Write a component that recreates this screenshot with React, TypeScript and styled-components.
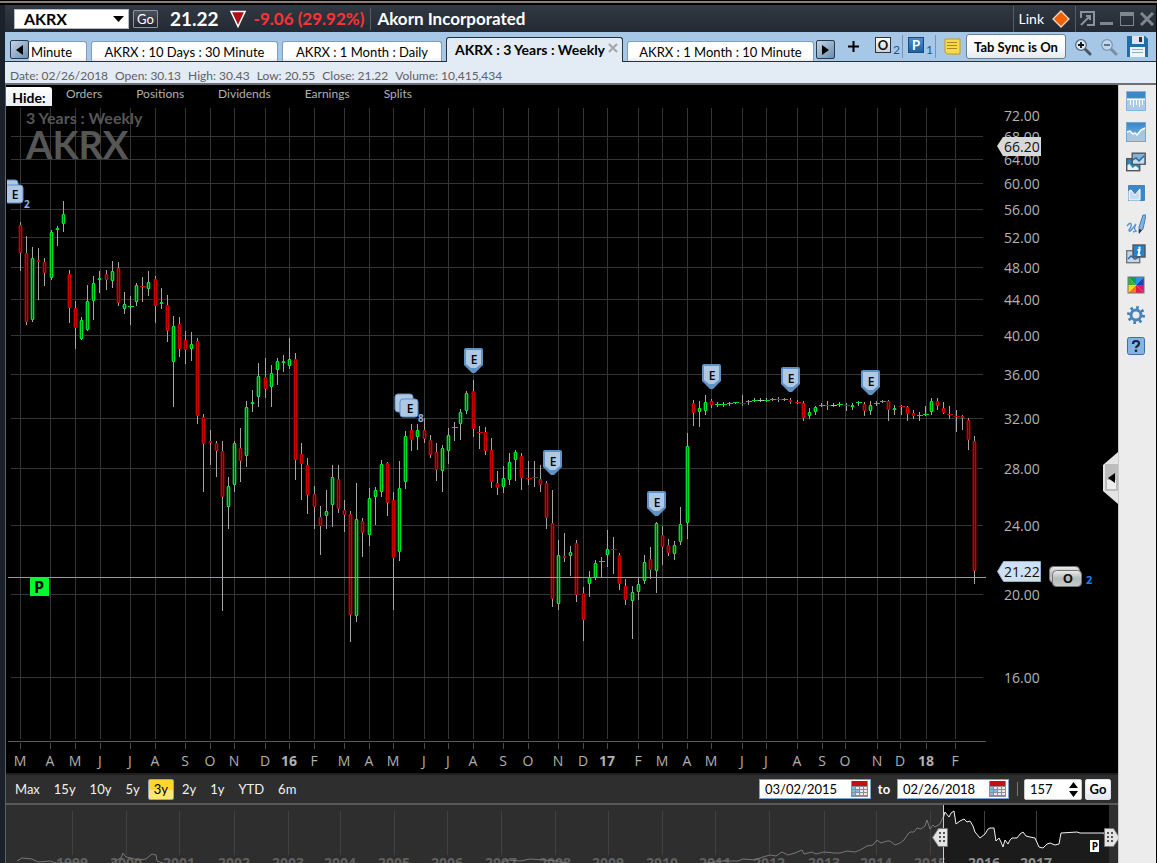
import React from 'react';
import styled, { createGlobalStyle, css } from 'styled-components';

const GlobalStyle = createGlobalStyle`
  * { box-sizing: border-box; }
  body { margin: 0; background: #000; }
  button, input, select { font-family: inherit; margin: 0; }
  button { cursor: pointer; }
`;

const Shell = styled.div`
  height: 100vh;
  display: flex;
  flex-direction: column;
  overflow: hidden;
  background: #000;
  font-family: Lato, 'Open Sans', sans-serif;
  color: #000;
`;

const TopEdge = styled.div`
  flex: none;
  height: 5px;
  border-top: 1px solid #000;
  border-bottom: 2px solid #000;
  background: #8a7f78;
`;

const Frame = styled.div`
  flex: 1;
  min-height: 0;
  display: flex;
  flex-direction: column;
  margin-right: 1px;
  border-left: 5px solid #1b212b;
`;

/* ---------- title bar ---------- */

const TitleBar = styled.header`
  flex: none;
  display: flex;
  align-items: center;
  height: 27px;
  padding-left: 9px;
  background: linear-gradient(#303843, #242a33);
  color: #fff;
`;

const SymbolBox = styled.div`
  position: relative;
  width: 115px;
  height: 20px;
  svg { position: absolute; right: 5px; top: 7px; pointer-events: none; }
`;

const SymbolSelect = styled.select`
  appearance: none;
  width: 100%;
  height: 20px;
  padding: 0 0 0 9px;
  border: 1px solid #b8bcc2;
  background: #fff;
  color: #000;
  font-size: 16px;
  line-height: 18px;
  font-weight: 700;
`;

const GoDark = styled.button`
  width: 25px;
  height: 18px;
  margin-left: 4px;
  padding: 0;
  border: 1px solid #8d949e;
  border-radius: 1px;
  background: linear-gradient(#4a5360, #20262f);
  color: #fff;
  font-size: 13px;
  line-height: 14px;
`;

const Price = styled.strong`
  margin: 0 11px 0 12px;
  font-size: 19px;
  line-height: 24px;
`;

const Change = styled.strong`
  margin-left: 8px;
  color: #fb3335;
  font-size: 17px;
  line-height: 22px;
`;

const Rule = styled.span<{ $tall?: boolean }>`
  flex: none;
  width: 1px;
  height: ${p => (p.$tall ? 26 : 22)}px;
  background: #545c67;
`;

const Company = styled.h1`
  flex: 1;
  margin: 0 0 0 6px;
  font-size: 17px;
  line-height: 22px;
  font-weight: 700;
`;

const QuoteRule = styled(Rule)`
  margin-left: 6px;
`;

const WindowTools = styled.div`
  display: flex;
  align-items: center;
`;

const LinkButton = styled.button`
  display: flex;
  align-items: center;
  gap: 8px;
  height: 26px;
  padding: 0 5px;
  border: 0;
  background: none;
  color: #fff;
  font-size: 14px;
`;

const IconButton = styled.button<{ $w?: number }>`
  flex: none;
  display: flex;
  align-items: center;
  justify-content: center;
  width: ${p => p.$w ?? 22}px;
  height: 22px;
  padding: 0;
  border: 0;
  background: none;
`;

/* ---------- tab bar ---------- */

const TabBar = styled.nav`
  flex: none;
  display: flex;
  align-items: flex-end;
  height: 30px;
  padding: 0 5px;
  border-bottom: 1px solid #2a303a;
  background: #a7c7e7;
`;

const TabArrow = styled.button`
  flex: none;
  display: flex;
  align-items: center;
  justify-content: center;
  width: 19px;
  height: 19px;
  margin-bottom: 2px;
  padding: 0;
  border: 1px solid #26394f;
  border-radius: 2px;
  background: linear-gradient(135deg, #c3d4e6, #6d8dae);
`;

const Tab = styled.button<{ $active?: boolean; $w: number }>`
  flex: none;
  width: ${p => p.$w}px;
  height: 20px;
  margin-right: 4px;
  padding: 0;
  border: 1px solid #7f9dbd;
  border-bottom: 0;
  border-radius: 3px 3px 0 0;
  background: linear-gradient(#fff 80%, #ececec);
  color: #000;
  font-size: 13px;
  line-height: 20px;
  white-space: nowrap;
  ${p => p.$active && css`
    display: flex;
    align-items: center;
    justify-content: flex-end;
    gap: 3px;
    height: 25px;
    margin-bottom: -1px;
    padding-right: 4px;
    border: 1px solid #26303f;
    border-bottom: 0;
    background: #e3ebf5;
    font-size: 14px;
    font-weight: 700;
    svg { margin-bottom: 4px; }
  `}
`;

const FirstTab = styled(Tab)`
  padding-left: 2px;
  border-left: 0;
  border-radius: 0 3px 0 0;
  text-align: left;
`;

const LastTab = styled(Tab)`
  margin-right: 2px;
`;

const TabTools = styled.div`
  display: flex;
  flex: 1;
  align-items: center;
  height: 29px;
  padding-left: 7px;
`;

const AddButton = styled(IconButton)`
  margin-right: 11px;
`;

const CountButton = styled.button<{ $blue?: boolean }>`
  flex: none;
  display: flex;
  align-items: flex-end;
  gap: 2px;
  height: 22px;
  width: 26px;
  padding: 0 0 3px;
  border: 0;
  background: none;
  color: #17568f;
  font-size: 12px;
  line-height: 11px;
  b {
    width: 16px;
    height: 16px;
    margin-bottom: 2px;
    border: 1px solid ${p => (p.$blue ? '#164c80' : '#333')};
    background: ${p => (p.$blue ? 'linear-gradient(#4b8ec9, #1c62a4)' : 'linear-gradient(#fff, #c8d3de)')};
    color: ${p => (p.$blue ? '#fff' : '#111')};
    font-size: 13px;
    line-height: 14px;
  }
`;

const ToolRule = styled.span`
  flex: none;
  width: 1px;
  height: 23px;
  margin: 0 5px 0 1px;
  background: #7c93ad;
`;

const SyncButton = styled.button`
  flex: none;
  width: 100px;
  height: 25px;
  margin-left: 3px;
  margin-right: 6px;
  padding: 0;
  border: 1px solid #6c7e92;
  border-radius: 3px;
  background: linear-gradient(#fff 40%, #e6e9ee);
  color: #000;
  font-size: 13px;
  font-weight: 700;
  white-space: nowrap;
`;

/* ---------- quote info ---------- */

const InfoBar = styled.div`
  flex: none;
  display: flex;
  gap: 7px;
  height: 23px;
  padding: 6px 0 0 5px;
  border-bottom: 2px solid #6b6f75;
  background: #e3ebf5;
  color: #5f6163;
  font-size: 12px;
  line-height: 16px;
`;

const Body = styled.div`
  flex: 1;
  min-height: 0;
  display: flex;
`;

const Main = styled.main`
  flex: 1;
  min-width: 0;
  display: flex;
  flex-direction: column;
  position: relative;
  border-left: 1px solid #59616d;
  background: #000;
`;

const HideRow = styled.div`
  flex: none;
  display: flex;
  align-items: flex-start;
  height: 22px;
  padding-top: 2px;
`;

const HideLabel = styled.span`
  width: 46px;
  height: 19px;
  margin-right: 9px;
  border-radius: 0 3px 0 0;
  background: linear-gradient(#fff, #e9eef5);
  color: #000;
  font-size: 14px;
  font-weight: 700;
  line-height: 22px;
  text-align: center;
`;

const HideToggle = styled.button`
  margin-right: 24px;
  padding: 0 5px;
  border: 0;
  background: none;
  color: #b0b0b0;
  font-size: 12px;
  line-height: 14px;
`;

const ChartSvg = styled.svg`
  flex: none;
  display: block;
  width: 100%;
  height: auto;
  overflow: visible;
  font-family: 'Open Sans', 'Noto Sans', sans-serif;
`;

const CollapseButton = styled.button`
  position: absolute;
  right: 0;
  top: 367px;
  width: 16px;
  height: 52px;
  padding: 0;
  border: 0;
  background: none;
  svg { display: block; }
`;

/* ---------- range bar ---------- */

const RangeBar = styled.form`
  flex: none;
  display: flex;
  align-items: center;
  height: 32px;
  padding: 0 7px 0 3px;
  border-top: 2px solid #1d1d1d;
  border-bottom: 2px solid #585858;
  background: #2e2e2e;
  color: #fff;
`;

const Ranges = styled.div`
  flex: 1;
  display: flex;
`;

const RangeButton = styled.button<{ $active?: boolean }>`
  height: 21px;
  margin-right: 2px;
  padding: 0 5px;
  border: 1px solid ${p => (p.$active ? '#9aa3b5' : 'transparent')};
  border-radius: 2px;
  background: ${p => (p.$active ? 'linear-gradient(#ffd530 50%, #ffe675 52%)' : 'none')};
  color: ${p => (p.$active ? '#000' : '#f2f2f2')};
  font-size: 13px;
  line-height: 19px;
`;

const DateBox = styled.span`
  display: flex;
  align-items: center;
  width: 112px;
  height: 20px;
  padding-right: 2px;
  border: 1px solid #7ea2c8;
  background: #fff;
`;

const DateInput = styled.input`
  flex: 1;
  min-width: 0;
  padding: 0 0 0 5px;
  border: 0;
  background: none;
  color: #000;
  font-size: 13px;
`;

const ToLabel = styled.strong`
  width: 26px;
  font-size: 13px;
  text-align: center;
`;

const RangeRule = styled.span`
  width: 1px;
  height: 14px;
  margin: 0 6px 0 8px;
  background: #777;
`;

const CountBox = styled(DateBox)`
  width: 58px;
  height: 21px;
  border-color: #c9c9c9;
  border-radius: 2px;
`;

const GoLight = styled.button`
  width: 26px;
  height: 21px;
  margin-left: 3px;
  padding: 0;
  border: 1px solid #dfe3e8;
  border-radius: 2px;
  background: linear-gradient(#fff, #e4e9f0);
  color: #000;
  font-size: 13px;
  font-weight: 700;
`;

const Navigator = styled.div`
  flex: 1;
  min-height: 0;
  overflow: hidden;
  background: #2e2e2e;
`;

const NavigatorSvg = styled.svg`
  display: block;
  width: 100%;
  height: auto;
  font-family: 'Open Sans', 'Noto Sans', sans-serif;
`;

/* ---------- side rail ---------- */

const Rail = styled.aside`
  flex: none;
  width: 38px;
  border-left: 1px solid #c9c9c9;
  background: #ececec;
`;

const RailList = styled.div`
  display: flex;
  flex-direction: column;
  align-items: center;
  justify-content: space-between;
  height: 272px;
  padding-top: 5px;
  padding-right: 4px;
`;

/* ---------- data ---------- */

type Candle = [number, number, number, number, 'g' | 'r' | 'w'];

// high, low, body top, body bottom, direction; one entry per week
const candles: Candle[] = [
  [222,271,225,253,'r'],[236,325,253,322,'r'],[247,322,258,320,'g'],[248,300,260,262,'r'],[258,286,262,273,'r'],
  [230,280,232,278,'g'],[226,246,228,230,'g'],[201,232,214,224,'g'],[270,323,274,308,'r'],[301,349,308,328,'r'],
  [317,340,320,339,'g'],[285,331,301,330,'g'],[276,320,283,301,'g'],[271,293,278,280,'g'],[270,290,274,280,'r'],
  [261,288,271,281,'g'],[262,306,268,303,'r'],[292,314,304,309,'g'],[296,325,306,307,'g'],[283,306,285,302,'g'],
  [277,302,286,287,'r'],[271,296,282,289,'g'],[276,323,279,306,'r'],[288,309,302,304,'g'],[295,342,305,331,'r'],
  [316,407,326,362,'g'],[317,357,324,349,'r'],[331,364,340,350,'r'],[332,361,344,349,'g'],[338,424,341,416,'r'],
  [414,492,417,444,'r'],[430,465,441,443,'r'],[441,477,443,451,'r'],[441,611,451,497,'r'],[477,529,486,507,'g'],
  [441,492,443,485,'g'],[428,482,448,461,'r'],[401,467,407,456,'g'],[390,412,402,404,'g'],[363,407,376,397,'g'],
  [358,398,377,389,'r'],[365,407,373,387,'g'],[358,385,361,370,'g'],[355,372,361,363,'g'],[338,369,359,366,'g'],
  [353,480,359,460,'r'],[443,500,454,464,'r'],[458,514,465,495,'r'],[486,529,494,507,'r'],[506,555,517,526,'r'],
  [490,529,511,516,'g'],[465,527,477,505,'g'],[465,513,479,509,'r'],[500,532,510,515,'r'],[511,642,514,615,'r'],
  [483,622,519,616,'g'],[518,557,521,533,'r'],[488,546,498,535,'g'],[487,525,490,497,'g'],[460,497,464,492,'g'],
  [462,516,463,503,'r'],[492,610,500,558,'r'],[461,561,488,552,'g'],[431,489,436,482,'g'],[424,451,430,440,'r'],
  [424,450,430,437,'g'],[418,443,430,439,'r'],[435,458,440,455,'r'],[443,481,452,470,'r'],[445,492,448,471,'g'],
  [428,464,435,451,'g'],[422,441,427,428,'g'],[409,440,412,424,'g'],[391,414,393,411,'g'],[380,437,391,429,'r'],
  [426,449,432,433,'r'],[427,455,432,451,'r'],[438,488,450,482,'r'],[471,495,483,488,'r'],[466,493,478,487,'g'],
  [453,485,462,480,'g'],[450,481,452,460,'g'],[453,490,456,478,'r'],[461,485,478,479,'r'],[461,487,477,478,'r'],
  [465,492,479,485,'r'],[481,529,483,518,'r'],[490,607,523,599,'r'],[540,610,555,604,'g'],[533,562,556,558,'r'],
  [546,576,552,556,'g'],[540,602,543,595,'r'],[587,641,593,620,'r'],[571,597,577,584,'g'],[560,580,563,578,'g'],
  [557,577,561,562,'g'],[530,567,549,555,'g'],[537,574,549,550,'r'],[553,590,555,584,'r'],[579,605,586,600,'r'],
  [586,639,592,601,'g'],[577,600,584,592,'g'],[555,584,562,581,'g'],[547,579,559,570,'r'],[522,593,523,571,'g'],
  [526,565,535,547,'r'],[539,556,545,553,'r'],[541,560,545,554,'g'],[507,545,524,542,'g'],[433,539,446,523,'g'],
  [400,426,403,413,'r'],[401,427,408,412,'g'],[395,415,402,411,'g'],[399,408,401,405,'r'],[402,407,404,405,'g'],
  [402,407,404,405,'g'],[402,406,403,404,'g'],[402,404,402,403,'g'],[395,406,403,404,'r'],[400,405,401,402,'g'],
  [398,402,400,401,'g'],[398,402,400,401,'w'],[398,402,400,401,'g'],[398,401,399,400,'g'],[397,402,399,400,'r'],
  [398,401,399,400,'g'],[398,404,400,402,'r'],[400,404,402,403,'r'],[401,421,403,418,'r'],[408,419,412,416,'g'],
  [406,415,407,412,'g'],[403,407,405,406,'g'],[401,410,405,406,'r'],[403,407,405,406,'w'],[402,407,404,405,'g'],
  [403,411,405,406,'r'],[403,410,405,407,'g'],[401,406,402,403,'g'],[402,416,404,411,'r'],[401,415,405,411,'g'],
  [401,406,403,404,'g'],[400,403,401,402,'g'],[400,421,401,410,'r'],[405,415,408,410,'g'],[405,415,406,407,'r'],
  [406,421,407,414,'r'],[410,419,413,416,'r'],[412,421,415,416,'g'],[406,416,414,415,'g'],[398,415,401,412,'g'],
  [398,410,401,406,'r'],[402,414,408,413,'r'],[406,419,414,415,'r'],[410,432,416,417,'r'],[415,430,416,418,'r'],
  [418,450,420,440,'r'],[436,584,441,571,'r'],
];

const prices: [string, number][] = [
  ['72.00',115],['68.00',136],['64.00',159],['60.00',183],['56.00',209],['52.00',237],['48.00',267],['44.00',299],
  ['40.00',335],['36.00',374],['32.00',418],['28.00',468],['24.00',525],['20.00',594],['16.00',677],
];

const months: [number, string][] = [
  [20,'M'],[50,'A'],[75,'M'],[100,'J'],[130,'J'],[155,'A'],[185,'S'],[210,'O'],[234,'N'],[265,'D'],[289,'16'],[314,'F'],
  [344,'M'],[369,'A'],[393,'M'],[424,'J'],[448,'J'],[473,'A'],[503,'S'],[528,'O'],[558,'N'],[583,'D'],[607,'17'],[638,'F'],
  [662,'M'],[687,'A'],[711,'M'],[742,'J'],[766,'J'],[797,'A'],[822,'S'],[845,'O'],[877,'N'],[900,'D'],[926,'18'],[955,'F'],
];

const shields: [number, number][] = [[473,348],[552,450],[656,491],[711,364],[790,367],[870,370]];

const years = [72,126,179,234,288,340,394,447,501,555,608,662,715,769,824,876,930,984,1036];

const tools = ['table','area','layers','event','draw','info','palette','settings','help'] as const;

/* ---------- drawings ---------- */

const CandleMark = ({ i, c }: { i: number; c: Candle }) => {
  const [high, low, top, bottom, dir] = c;
  const x = Math.floor(20.5 + i * 6.115);
  const h = bottom - top;
  const bright = dir === 'g' ? '#00dc2a' : dir === 'r' ? '#c80000' : '#bbb';
  const edge = dir === 'g' ? '#004f10' : '#4c0000';
  return (
    <g>
      <rect x={x} y={high} width={1} height={low - high} fill="#a6a6a6" />
      {h <= 1 ? (
        <rect x={x - 2} y={top} width={6} height={1} fill={bright} />
      ) : (
        <>
          <rect x={x - 2} y={top + 1} width={5} height={Math.max(1, h - 2)} fill={edge} />
          <rect x={x - 1} y={top} width={3} height={h} fill={bright} />
          <rect x={x} y={top + 1} width={1} height={Math.max(0, h - 2)} fill={dir === 'g' ? '#006212' : '#5e0000'} />
        </>
      )}
    </g>
  );
};

const Shield = ({ x, y }: { x: number; y: number }) => (
  <g>
    <path d={`M${x - 9} ${y + 2}q0 -2 2 -2h15q2 0 2 2v15l-8 8h-3l-8 -8z`} fill="#5f93c6" />
    <path d={`M${x - 7} ${y + 2}h15v14l-5 4h-5l-5 -4z`} fill="#afc8e4" />
    <text x={x + 1} y={y + 16} fontSize="12" fontWeight="600" textAnchor="middle" fill="#000">E</text>
  </g>
);

const Stack = ({ x, y }: { x: number; y: number }) => (
  <g stroke="#5f93c6" fill="#afc8e4">
    <rect x={x - 5} y={y - 5} width={18} height={18} rx={3} />
    <rect x={x} y={y} width={18} height={18} rx={3} />
    <text x={x + 10} y={y + 14} fontSize="12" fontWeight="600" textAnchor="middle" fill="#000" stroke="none">E</text>
  </g>
);

const PriceChart = () => (
  <ChartSvg viewBox="6 107 1112 666" role="img" aria-label="AKRX weekly price chart">
    <defs>
      <linearGradient id="pill" x1="0" y1="0" x2="0" y2="1">
        <stop offset="0" stopColor="#eee" /><stop offset="0.5" stopColor="#b5baba" /><stop offset="1" stopColor="#c8cccc" />
      </linearGradient>
      <clipPath id="plot"><rect x="7" y="107" width="1111" height="666" /></clipPath>
    </defs>
    <g fill="#353535">
      {prices.slice(1).map(([p, y]) => <rect key={p} x="11" y={y} width="972" height="1" />)}
      {months.map(([x]) => <rect key={x} x={x} y="108" width="1" height="631" />)}
    </g>
    <rect x="8" y="741" width="978" height="1" fill="#5a5a5a" />
    {months.map(([x]) => <rect key={x} x={x} y="743" width="1" height="6" fill="#4a4a4a" />)}
    <g fill="#565656" fontWeight="700">
      <text x="26" y="124" fontSize="16" fontFamily="Lato">3 Years : Weekly</text>
      <text x="26" y="159" fontSize="38" fontFamily="Lato">AKRX</text>
    </g>
    {candles.map((c, i) => <CandleMark key={i} i={i} c={c} />)}
    <rect x="8" y="577" width="978" height="1" fill="#14f03c" />
    <rect x="30" y="578" width="19" height="18" fill="#00fb2d" />
    <text x="39" y="593" fontSize="16" fontWeight="700" textAnchor="middle" fill="#000">P</text>
    {shields.map(([x, y]) => <Shield key={x} x={x} y={y} />)}
    <g clipPath="url(#plot)"><Stack x={5} y={185} /></g>
    <text x="24" y="208" fontSize="10" fontWeight="700" fill="#8ab4e6">2</text>
    <Stack x={400} y={399} />
    <text x="418" y="422" fontSize="10" fontWeight="700" fill="#8ab4e6">8</text>
    <g fontSize="14" fill="#b4b4b4">
      {prices.map(([p, y]) => <text key={p} x="1004" y={y + 6}>{p}</text>)}
    </g>
    <path d="M997 146l6 -9h38v19h-38z" fill="#d8d8d8" />
    <text x="1004" y="152" fontSize="14" fill="#111">66.20</text>
    <path d="M997.5 571.5l6 -10h37v20h-37z" fill="#cfe0f2" stroke="#8fb0d4" />
    <text x="1004" y="577" fontSize="14" fill="#111">21.22</text>
    <g fill="url(#pill)" stroke="#777">
      <rect x="1049.500" y="566.500" width="30" height="16" rx="4" />
      <rect x="1052.500" y="570.500" width="29" height="16" rx="4" />
    </g>
    <text x="1068" y="583" fontSize="13" fontWeight="700" textAnchor="middle" fill="#111">O</text>
    <text x="1086" y="584" fontSize="11" fontWeight="700" fill="#0a84ff">2</text>
    <g fontSize="14" fill="#b0b0b0" textAnchor="middle">
      {months.map(([x, m]) => <text key={x} x={x} y="766" fontWeight={m.length > 1 ? 700 : 400}>{m}</text>)}
    </g>
  </ChartSvg>
);

const Grip = ({ x, flip }: { x: number; flip?: boolean }) => (
  <g transform={`translate(${x} 828)`}>
    <path d={flip ? 'M.5 .5h9l6 9l-6 9h-9z' : 'M15.500 .5h-9l-6 9l6 9h9z'} fill="#e4e4e4" stroke="#777" />
    <g fill="#555">
      {[5, 9, 13].map(y => [0, 4].map(dx => <rect key={`${y}${dx}`} x={(flip ? 3 : 7) + dx} y={y - 1} width="2" height="2" />))}
    </g>
  </g>
);

const selected = 'M943.5 817L945 812L949 817L951 813L954 811L956 824L960 821L964 819L967 822L970 821L973 826L975 832L980 838L985 834L988 829L990 828L994 828L996 841L999 838L1001 842L1003 847L1005 840L1008 844L1010 840L1012 838L1017 838L1020 834L1023 832L1026 836L1030 837L1035 838L1039 847L1043 848L1047 844L1050 843L1055 845L1059 844L1061 833L1077 832L1080 833L1104 833L1106 840L1109 840';

const RangeNavigator = () => (
  <NavigatorSvg viewBox="6 805 1112 72" role="img" aria-label="AKRX history since 1998">
    <rect x="944" y="805" width="165" height="72" fill="#000" />
    <g fill="#404040">
      {years.map(x => <rect key={x} x={x} y="811" width="1" height="44" />)}
    </g>
    <path d={selected + 'V877H943z'} fill="#1b1b1b" />
    <g fontSize="14" fontWeight="700" textAnchor="middle">
      {years.map((x, i) => <text key={x} x={x} y="868" fill={x > 943 ? '#8c8c8c' : '#606060'}>{1999 + i}</text>)}
    </g>
    <path
      d="M17 861L22 858L32 859L38 862L50 861L56 863L110 864L117 860L121 858L123 853L126 857L131 858L138 860L146 859L152 854L156 855L157 861L163 863L170 864L500 864L507 860L520 861L530 859L557 861L570 864L700 864L723 861L738 861L743 859L755 860L763 857L770 855L776 856L782 852L788 855L795 853L802 850L804 854L812 852L816 854L824 852L834 853L840 853L847 851L855 852L860 850L867 846L873 845L877 840L881 843L887 841L890 841L895 845L900 843L904 840L908 834L910 832L914 832L917 828L921 829L925 826L927 820L930 829L933 825L935 827L940 824L943 817"
      fill="none" stroke="#777"
    />
    <path d={selected} fill="none" stroke="#f2f2f2" />
    <rect x="943" y="805" width="1" height="72" fill="#ccc" />
    <rect x="1090" y="840" width="9" height="12" fill="#fff" />
    <text x="1095" y="850" fontSize="10" fontWeight="700" textAnchor="middle" fill="#000">P</text>
    <Grip x={932} />
    <Grip x={1104} flip />
  </NavigatorSvg>
);

const Calendar = () => (
  <svg width="17" height="16" viewBox="0 0 17 16">
    <rect width="17" height="16" fill="#8a8f96" />
    <rect x="1" width="15" height="5" fill="#c80f0f" />
    {[6, 9, 12].map(y => [1, 5, 9, 13].map(x => <rect key={`${x}-${y}`} x={x} y={y} width="3" height="2" fill={x === 1 || (y === 9 && x < 9) ? '#7cb9ee' : '#e8e8e8'} />))}
  </svg>
);

const Magnifier = ({ minus }: { minus?: boolean }) => (
  <svg width="18" height="18" viewBox="0 0 18 18" opacity={minus ? 0.5 : 1}>
    <path d="M10.500 10.500l5.500 5.500" stroke="#4b5561" strokeWidth="3" strokeLinecap="round" />
    <circle cx="7" cy="7" r="5.300" fill="#dcecf8" stroke="#5a6a7c" strokeWidth="1.300" />
    <path d={minus ? 'M4 7h6' : 'M4 7h6M7 4v6'} stroke="#111" strokeWidth="1.800" />
  </svg>
);

const ToolIcon = ({ kind }: { kind: (typeof tools)[number] }) => (
  <svg width="20" height="20" viewBox="0 0 20 20">
    <defs>
      <linearGradient id={`sky-${kind}`} x1="0" y1="0" x2="0" y2="1">
        <stop offset="0" stopColor="#3584c8" /><stop offset="1" stopColor="#8fbfe6" />
      </linearGradient>
    </defs>
    {kind === 'table' && <>
      <rect x=".5" y=".5" width="19" height="19" fill="#a7cbe8" stroke="#84b3dc" />
      <rect x="1" y="1" width="18" height="6" fill="#3c87c7" />
      <path d="M1 8.500h18" stroke="#fff" />
      <path d="M4.500 9v5M7.500 9v7M10.500 9v5M13.500 9v7M16.500 9v5" stroke="#fff" />
    </>}
    {kind === 'area' && <>
      <rect x=".5" y=".5" width="19" height="19" fill="url(#sky-area)" stroke="#6ea7d8" />
      <path d="M1 10l3 -1l3 3l2 -1l2 2l4 -5l4 -2v13h-18z" fill="#a9c6df" />
      <path d="M1 10l3 -1l3 3l2 -1l2 2l4 -5l4 -2" fill="none" stroke="#fff" strokeWidth="1.500" />
    </>}
    {kind === 'layers' && <>
      <rect x=".7" y="6.700" width="13" height="12" fill="#2e84cf" stroke="#555" strokeWidth="1.400" />
      <path d="M1.500 13l2 -1l3 4l3 -2l3 2v2h-11z" fill="#e8f3fc" />
      <rect x="6.200" y="1.200" width="13" height="11" fill="#7fb2dc" stroke="#555" strokeWidth="1.400" />
      <path d="M7 8l3 -2l3 3l5 -5v7.500h-11z" fill="#c9dcec" />
      <path d="M7 8l3 -2l3 3l5 -5" fill="none" stroke="#2c6396" strokeWidth="1.500" />
    </>}
    {kind === 'event' && <>
      <rect x="2" y="2" width="17" height="16" rx="1" fill="#3f86c3" />
      <path d="M3 8l2 -1l4 5l5 -6v11h-11z" fill="#c5dcef" stroke="#fff" />
    </>}
    {kind === 'draw' && <>
      <path d="M1 12q3 -4 4 -2t-2 6q0 3 4 -2l3 -4q-3 5 0 7l-3 1" fill="none" stroke="#5c97d1" strokeWidth="1.500" />
      <path d="M17 1l3 0l-3 14l-4 4l0 -6z" fill="#7db4e5" stroke="#4a7fae" />
      <path d="M13 15l3 1l-3 4z" fill="#333" />
    </>}
    {kind === 'info' && <>
      <rect x=".7" y="6.700" width="13" height="12" fill="#c3d7e9" stroke="#777" strokeWidth="1.400" />
      <path d="M2 15l3 -3l4 3l4 -2" fill="none" stroke="#2e6da5" strokeWidth="1.500" />
      <rect x="7" y="1" width="12" height="12" fill="#2383cf" stroke="#555" strokeWidth="1.400" />
      <path d="M11.500 6h2l-1 5h2" fill="none" stroke="#fff" strokeWidth="2" />
      <circle cx="13.500" cy="3.800" r="1.200" fill="#fff" />
    </>}
    {kind === 'palette' && <>
      <path d="M10 10L2 2h8z" fill="#109b5a" /><path d="M10 10V2h8z" fill="#2196e8" />
      <path d="M10 10L18 2v8z" fill="#2740a8" /><path d="M10 10h8v8z" fill="#d6187f" />
      <path d="M10 10l8 8h-8z" fill="#ef1749" /><path d="M10 10v8H2z" fill="#f77a18" />
      <path d="M10 10l-8 8v-8z" fill="#f8da13" /><path d="M10 10H2V2z" fill="#35b434" />
      <rect x="2" y="2" width="16" height="16" fill="none" stroke="#77707a" />
    </>}
    {kind === 'settings' && <>
      <circle cx="10" cy="10" r="7.500" fill="none" stroke="#3f7fb6" strokeWidth="3" strokeDasharray="2.500 3.390" />
      <circle cx="10" cy="10" r="5" fill="none" stroke="#4785bb" strokeWidth="3" />
    </>}
    {kind === 'help' && <>
      <rect x="1.500" y="1.500" width="17" height="17" rx="2" fill="#86b4e2" stroke="#3d6ea5" />
      <path d="M7 8q0 -3 3 -3t3 2.500q0 1.500 -1.500 2.500t-1.500 2" fill="none" stroke="#15263a" strokeWidth="2.200" />
      <rect x="8.800" y="13.500" width="2.400" height="2.400" fill="#15263a" />
    </>}
  </svg>
);

export default function App() {
  return (
    <Shell>
      <GlobalStyle />
      <TopEdge />
      <Frame>
        <TitleBar>
          <SymbolBox>
            <SymbolSelect aria-label="Symbol" defaultValue="AKRX"><option>AKRX</option></SymbolSelect>
            <svg width="11" height="7"><path d="M0 0h11L5.500 6z" fill="#000" /></svg>
          </SymbolBox>
          <GoDark>Go</GoDark>
          <Price>21.22</Price>
          <svg width="16" height="18" viewBox="0 0 16 18"><path d="M1 1.500h14L8 16.500z" fill="#b01116" stroke="#fff" strokeWidth="1.500" /></svg>
          <Change>-9.06 (29.92%)</Change>
          <QuoteRule />
          <Company>Akorn Incorporated</Company>
          <WindowTools>
            <Rule $tall />
            <LinkButton>
              Link
              <svg width="18" height="18" viewBox="0 0 18 18"><path d="M9 1l8 8l-8 8l-8 -8z" fill="#f26005" stroke="#f3d9c8" strokeWidth="1.300" /></svg>
            </LinkButton>
            <Rule $tall />
            <IconButton aria-label="Pop out">
              <svg width="15" height="15" fill="none" stroke="#8a929e" strokeWidth="2"><path d="M1 7V1h13v13H7M10 9V5H6M10 5l-9 9" /></svg>
            </IconButton>
            <IconButton $w={17} aria-label="Minimize">
              <svg width="13" height="15"><path d="M0 12.500h13" stroke="#7f8690" strokeWidth="3" /></svg>
            </IconButton>
            <IconButton $w={23} aria-label="Maximize">
              <svg width="14" height="14" fill="none" stroke="#7f8690"><rect x=".5" y=".5" width="13" height="13" /><path d="M0 2h14" strokeWidth="4" /></svg>
            </IconButton>
            <IconButton $w={18} aria-label="Close">
              <svg width="14" height="14"><path d="M1 1l12 12M13 1l-12 12" stroke="#7f8690" strokeWidth="3" /></svg>
            </IconButton>
          </WindowTools>
        </TitleBar>

        <TabBar>
          <TabArrow aria-label="Previous tabs"><svg width="7" height="10"><path d="M7 0v10L0 5z" /></svg></TabArrow>
          <FirstTab $w={58}>Minute</FirstTab>
          <Tab $w={187}>AKRX : 10 Days : 30 Minute</Tab>
          <Tab $w={160}>AKRX : 1 Month : Daily</Tab>
          <Tab $w={177} $active>
            AKRX : 3 Years : Weekly
            <svg width="10" height="10"><path d="M1 1l8 8M9 1l-8 8" stroke="#a3a5a8" strokeWidth="2" /></svg>
          </Tab>
          <LastTab $w={187}>AKRX : 1 Month : 10 Minute</LastTab>
          <TabArrow aria-label="Next tabs"><svg width="7" height="10"><path d="M0 0v10L7 5z" /></svg></TabArrow>
          <TabTools>
            <AddButton aria-label="Add tab"><svg width="11" height="11"><path d="M0 5.500h11M5.500 0v11" stroke="#000" strokeWidth="2" /></svg></AddButton>
            <CountButton><b>O</b>2</CountButton>
            <ToolRule />
            <CountButton $blue><b>P</b>1</CountButton>
            <ToolRule />
            <IconButton aria-label="Notes">
              <svg width="17" height="17"><path d="M1 1h15v15H3l-2 -2z" fill="#f6d94c" stroke="#c19b1e" /><path d="M3 4.500h10M3 7.500h10M3 10.500h10" stroke="#a88720" /></svg>
            </IconButton>
            <SyncButton>Tab Sync is On</SyncButton>
            <IconButton aria-label="Zoom in"><Magnifier /></IconButton>
            <IconButton $w={30} aria-label="Zoom out"><Magnifier minus /></IconButton>
            <IconButton $w={26} aria-label="Save">
              <svg width="21" height="21"><path d="M0 0h18l3 3v18H0z" fill="#1f6fa6" /><path d="M5 0h12v8H5z" fill="#dfe5ea" /><path d="M12 1h3v5h-3z" fill="#333" /><path d="M3 11h15v10H3z" fill="#eef4f7" /><path d="M5 13.500h11M5 16.500h11" stroke="#7fb6b8" /></svg>
            </IconButton>
          </TabTools>
        </TabBar>

        <InfoBar>
          <span>Date: 02/26/2018</span><span>Open: 30.13</span><span>High: 30.43</span>
          <span>Low: 20.55</span><span>Close: 21.22</span><span>Volume: 10,415,434</span>
        </InfoBar>

        <Body>
          <Main>
            <HideRow>
              <HideLabel>Hide:</HideLabel>
              {['Orders', 'Positions', 'Dividends', 'Earnings', 'Splits'].map(t => <HideToggle key={t}>{t}</HideToggle>)}
            </HideRow>
            <PriceChart />
            <CollapseButton aria-label="Collapse side panel">
              <svg width="16" height="52"><path d="M16 0v52L1 39V13z" fill="#e4e4e4" /><rect x="3" y="12" width="13" height="27" fill="#bdbdbd" /><rect x="5" y="28" width="9" height="9" fill="#eee" /><path d="M13 21v10L6 26z" fill="#000" /></svg>
            </CollapseButton>
            <RangeBar onSubmit={e => e.preventDefault()}>
              <Ranges>
                {['Max', '15y', '10y', '5y', '3y', '2y', '1y', 'YTD', '6m'].map(r => (
                  <RangeButton key={r} type="button" $active={r === '3y'}>{r}</RangeButton>
                ))}
              </Ranges>
              <DateBox><DateInput aria-label="Start date" defaultValue="03/02/2015" /><Calendar /></DateBox>
              <ToLabel>to</ToLabel>
              <DateBox><DateInput aria-label="End date" defaultValue="02/26/2018" /><Calendar /></DateBox>
              <RangeRule />
              <CountBox>
                <DateInput aria-label="Number of bars" defaultValue="157" />
                <svg width="11" height="17"><path d="M1 7h9L5.500 1zM1 10h9L5.500 16z" /></svg>
              </CountBox>
              <GoLight>Go</GoLight>
            </RangeBar>
            <Navigator><RangeNavigator /></Navigator>
          </Main>
          <Rail>
            <RailList>
              {tools.map(t => <IconButton key={t} aria-label={t}><ToolIcon kind={t} /></IconButton>)}
            </RailList>
          </Rail>
        </Body>
      </Frame>
    </Shell>
  );
}
